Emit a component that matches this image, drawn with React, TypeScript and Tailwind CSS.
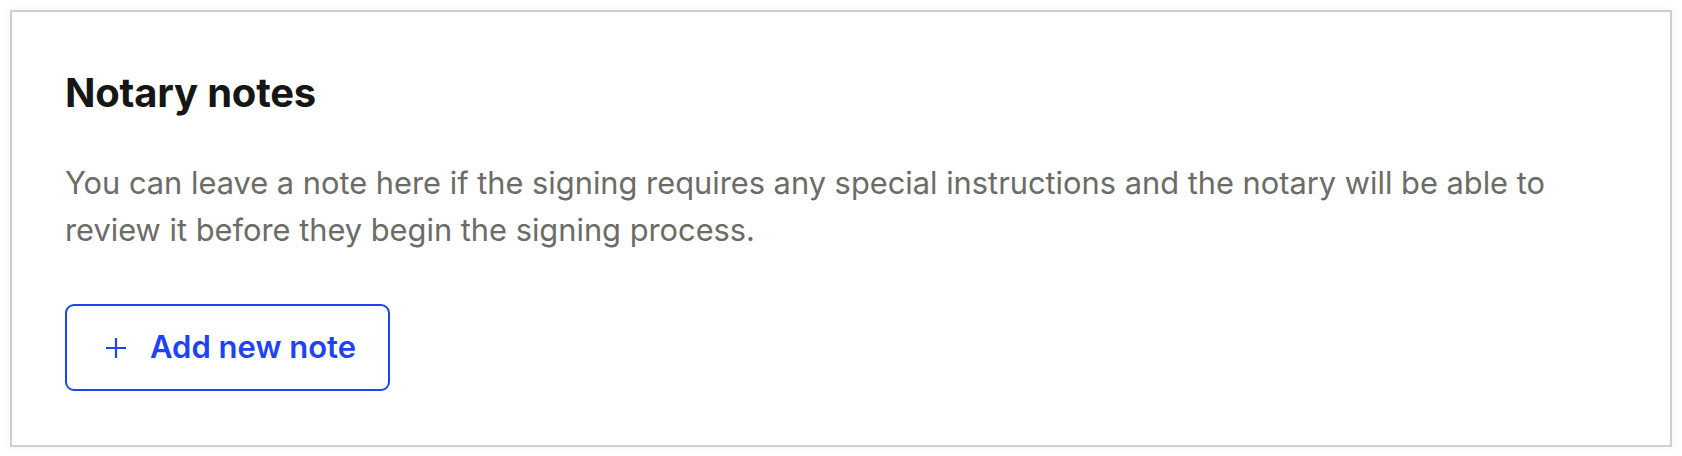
import React from 'react';

export default function App() {
  return (
    <div className="min-h-[456px] w-full bg-white p-[10px] pb-[9px] font-['Inter',sans-serif]">
      <div className="h-[437px] border-2 border-[#d0d0c9] bg-white px-[53px] pt-[57px] shadow-[0_0_10px_rgba(0,0,0,0.06)]">
        <h2 className="text-[40px] font-bold leading-[48px] tracking-[-0.2px] text-[#161616]">
          Notary notes
        </h2>
        <p className="mt-[43px] max-w-[1520px] text-[30.8px] leading-[46.5px] text-[#6b6b67]">
          You can leave a note here if the signing requires any special instructions and the notary will be able to
          review it before they begin the signing process.
        </p>
        <button
          type="button"
          className="mt-[51px] flex h-[87px] w-[325px] items-center gap-[24px] rounded-[9px] border-2 border-[#1d43f5] bg-white pl-[39px] text-[31px] font-semibold text-[#1d43f5]"
        >
          <svg width="20" height="20" viewBox="0 0 20 20" fill="none" stroke="currentColor" strokeWidth="2.2">
            <path d="M10 0v20M0 10h20" />
          </svg>
          <span>Add new note</span>
        </button>
      </div>
    </div>
  );
}
